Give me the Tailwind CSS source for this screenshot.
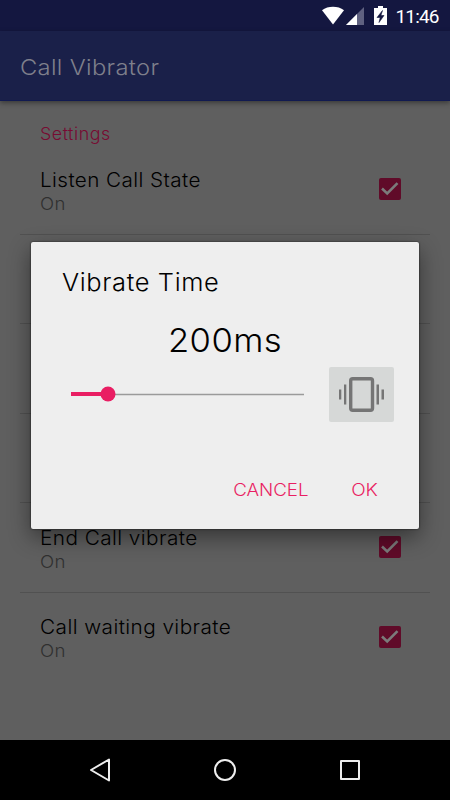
<!DOCTYPE html>
<html lang="en">
<head>
    <meta charset="UTF-8">
    <meta name="viewport" content="width=device-width, initial-scale=1.0">
    <title>Call Vibrator</title>
    <script src="https://cdn.jsdelivr.net/npm/@tailwindcss/browser@4"></script>
</head>
<body class="relative w-[450px] h-[800px] overflow-hidden flex flex-col bg-[#5f5f5f] font-['Inter',sans-serif] font-light text-black whitespace-nowrap">
    <!-- Status bar -->
    <div class="h-[31px] shrink-0 bg-[#141740] flex items-center justify-end pr-2.5 text-white">
        <svg class="w-[118px] h-[31px]" viewBox="322 0 118 31">
            <path d="M322 10.2C328 5.6 338 5.6 344 10.2L333 24.5Z" fill="#fff"/>
            <path d="M364 7V25H346Z" fill="#5f6180"/>
            <path d="M357 14V25H346Z" fill="#fff"/>
            <path d="M378 6h5v2h4v17h-13V8h4z" fill="#fff"/>
            <path d="M382.500 10.500l-5.500 7h3.200l-1.200 5 5-7h-3.100z" fill="#141740" stroke="#141740" stroke-width=".6"/>
            <text x="395.500" y="23" font-family="Roboto" font-size="19" font-weight="400" fill="#fff" textLength="44">11:46</text>
        </svg>
    </div>

    <!-- Toolbar -->
    <header class="h-[70px] shrink-0 bg-[#1a2049] border-b border-[#111a50] shadow-[0_2px_5px_rgba(0,0,0,0.4)] flex items-center pl-5">
        <h1 class="mt-[3px] text-[22px] tracking-[0.3px] text-[#7e7f8b] origin-left scale-x-[1.08]">Call Vibrator</h1>
    </header>

    <!-- Settings list -->
    <main class="px-5 grow">
        <h2 class="w-fit h-[44px] ml-5 pt-[21px] text-[17px] leading-6 tracking-[0.5px] font-[350] text-[#780b32] origin-left scale-x-[1.05]">Settings</h2>
        <div class="h-[90px] border-b border-[#515151] pl-5 pr-7 flex items-center justify-between">
            <div class="pt-1 origin-left scale-x-[1.06]">
                <p class="text-[19.5px] leading-6 tracking-[0.4px]">Listen Call State</p>
                <p class="text-[17.5px] leading-6 tracking-[0.4px] text-[#303030]">On</p>
            </div>
            <svg class="size-[24px] mb-0.5" viewBox="0 0 24 24"><rect x="1" y="1" width="22" height="22" rx="2" fill="#600b29"/><path d="M4 11.500l5.200 5L19.500 6.200" fill="none" stroke="#7b7b7b" stroke-width="2.600"/></svg>
        </div>
        <div class="h-[89px] border-b border-[#515151]"></div>
        <div class="h-[90px] border-b border-[#515151]"></div>
        <div class="h-[89px] border-b border-[#515151]"></div>
        <div class="h-[90px] border-b border-[#515151] pl-5 pr-7 flex items-center justify-between">
            <div class="pt-1 origin-left scale-x-[1.065]">
                <p class="text-[19.5px] leading-6 tracking-[0.4px]">End Call vibrate</p>
                <p class="text-[17.5px] leading-6 tracking-[0.4px] text-[#303030]">On</p>
            </div>
            <svg class="size-[24px] mb-0.5" viewBox="0 0 24 24"><rect x="1" y="1" width="22" height="22" rx="2" fill="#600b29"/><path d="M4 11.500l5.200 5L19.500 6.200" fill="none" stroke="#7b7b7b" stroke-width="2.600"/></svg>
        </div>
        <div class="h-[90px] pl-5 pr-7 flex items-center justify-between">
            <div class="pt-0.5 origin-left scale-x-[1.065]">
                <p class="text-[19.5px] leading-6 tracking-[0.4px]">Call waiting vibrate</p>
                <p class="text-[17.5px] leading-6 tracking-[0.4px] text-[#303030]">On</p>
            </div>
            <svg class="size-[24px] mb-0.5" viewBox="0 0 24 24"><rect x="1" y="1" width="22" height="22" rx="2" fill="#600b29"/><path d="M4 11.500l5.200 5L19.500 6.200" fill="none" stroke="#7b7b7b" stroke-width="2.600"/></svg>
        </div>
    </main>

    <!-- Navigation bar -->
    <nav class="h-[60px] shrink-0 bg-black flex items-center">
        <svg class="w-[450px] h-[60px]" viewBox="0 0 450 60" fill="none" stroke="#eee" stroke-width="2" stroke-linejoin="round">
            <path d="M109 19.500V40.500L91 30Z"/>
            <circle cx="225" cy="30" r="10"/>
            <rect x="341" y="21" width="18" height="18"/>
        </svg>
    </nav>

    <!-- Vibrate time dialog -->
    <div class="absolute left-[31px] top-[242px] w-[388px] h-[287px] rounded-[2px] bg-[#eee] shadow-[0_0_2px_rgba(0,0,0,0.8),0_8px_22px_rgba(0,0,0,0.45)] flex flex-col">
        <h3 class="w-fit ml-[31px] pt-[25px] text-[24px] leading-8 tracking-[0.6px] origin-left scale-x-[1.06]">Vibrate Time</h3>
        <p class="mt-[26px] text-[32px] leading-8 tracking-[0.4px] text-center scale-x-[1.08]">200ms</p>
        <div class="mt-[10px] pl-10 pr-[25px] flex items-center justify-between">
            <svg class="w-[233px] h-4 mb-0.5" viewBox="0 0 233 16">
                <path d="M37 8.500H233" stroke="#9a9a9a" stroke-width="1.500"/>
                <path d="M0 8H37" stroke="#e91e63" stroke-width="4"/>
                <circle cx="37" cy="8" r="7.500" fill="#e91e63"/>
            </svg>
            <button class="w-[65px] h-[55px] rounded-[2px] bg-[#d6d8d7]">
                <svg class="w-[65px] h-[55px]" viewBox="0 0 65 55" fill="#757575">
                    <rect x="21.700" y="11.700" width="21.800" height="31.600" rx="2" fill="none" stroke="#757575" stroke-width="3.400"/>
                    <rect x="10" y="22.500" width="2.300" height="10"/>
                    <rect x="15" y="17.500" width="2.300" height="20"/>
                    <rect x="47.500" y="17.500" width="2.500" height="20"/>
                    <rect x="52.500" y="22.500" width="2.500" height="10"/>
                </svg>
            </button>
        </div>
        <div class="mt-[56px] pr-[41px] flex justify-end gap-[46px] text-[17px] leading-6 text-[#e91e63] font-[350]">
            <button class="origin-right scale-x-[1.1]">CANCEL</button>
            <button class="origin-right scale-x-[1.12]">OK</button>
        </div>
    </div>
</body>
</html>
